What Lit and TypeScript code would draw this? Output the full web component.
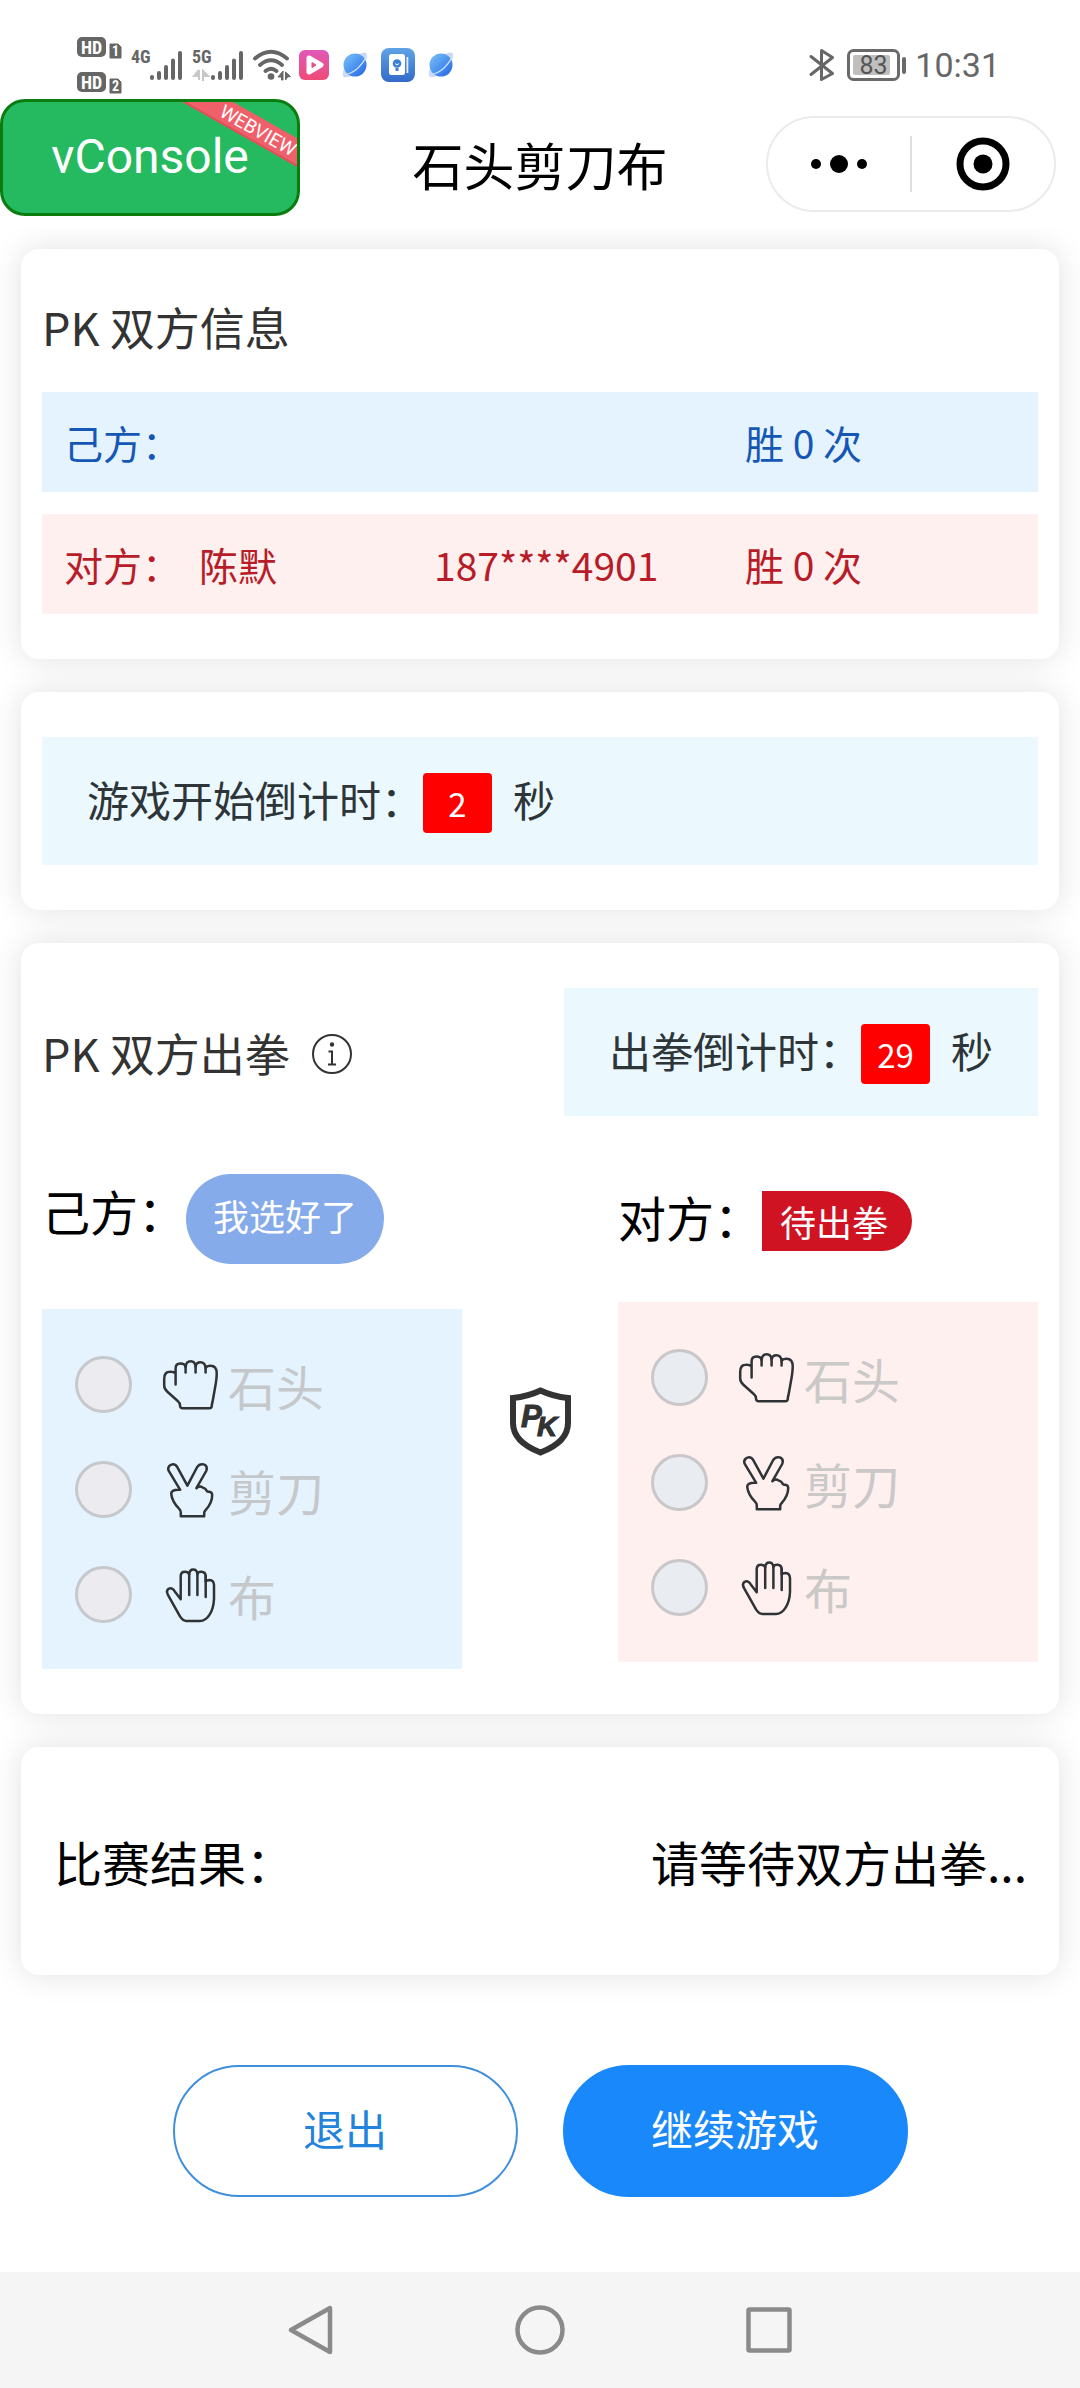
import { LitElement, html, svg, css } from "lit";
import { customElement, property, state } from "lit/decorators.js";

type Move = "rock" | "scissors" | "paper";

const MOVES: { id: Move; name: string }[] = [
  { id: "rock", name: "石头" },
  { id: "scissors", name: "剪刀" },
  { id: "paper", name: "布" },
];

const HANDS: Record<Move, string[]> = {
  rock: [
    "M15.6 29.5V13.5Q15.6 8.6 20.3 8.6Q24.6 8.6 25.6 11.8Q26.2 6.2 30.7 6.2Q35 6.2 35.6 11.5Q36.4 7.2 40.4 7.2Q45 7.2 45.6 12.8Q47 10.8 50.6 10.8Q56.7 10.8 56.7 18.5Q56.7 24 55 33L52.6 46.5Q51.8 49 51.8 51Q51.4 53.2 49.5 53.2H22.5Q20.3 53.2 20.1 51Q20 47.6 18 46.2L7.4 36.8Q4.2 34 4.2 30.5V23.8Q4.2 16.8 10 16.8Q14 16.6 15.6 18.6",
    "M25.6 11.5V17.5M35.6 11.2V17.5M45.6 12V17.5",
  ],
  scissors: [
    "M27.4 25.6L17.4 7.4Q15.2 3.4 11.4 4.6Q7.2 6.2 8.6 10.6L20.2 29.8Q11.6 29.2 11.2 33.6Q12 41.6 19 48.6Q20.9 50.4 20.8 52.6V56.2H44.2V53Q44.2 51.6 45.6 50.2Q52.4 42.6 52.2 34.6Q51.8 31.6 47.2 31.6Q45.8 28.2 42.4 27.4Q39.8 25.2 36.4 28.2L46.2 11Q48 6 43.8 4.4Q39.6 3.4 37.2 7Z",
  ],
  paper: [
    "M20.7 34.2V11Q20.9 6.8 25 6.8Q28.2 6.8 29.2 9.2Q29.6 4.4 33.2 4.4Q37 4.4 37.4 9Q38.4 6.6 41.4 6.8Q45.6 7 45.7 11.4V16.6Q46.6 15 49.6 15Q53.8 15.4 54 20V34Q53.6 43.6 49.6 49.6Q45.6 56 40 56H26.4Q23 56 20 51.4L8.2 30.4Q5.6 26 8.6 23.8Q12 22 14.6 26.2Z",
    "M29.2 9V30M37.4 9V30M45.7 11V32",
  ],
};

@customElement("hand-icon")
export class HandIcon extends LitElement {
  @property() move: Move = "rock";

  static styles = css`
    :host {
      display: block;
      width: 60px;
      height: 60px;
    }
    .hand {
      display: block;
      width: 100%;
      height: 100%;
      fill: none;
      stroke: #2f3336;
      stroke-width: 2.5;
      stroke-linecap: round;
      stroke-linejoin: round;
    }
  `;

  render() {
    return html`<svg class="hand" viewBox="0 0 60 60" aria-hidden="true">
      ${HANDS[this.move].map((d) => svg`<path d=${d} />`)}
    </svg>`;
  }
}

@customElement("status-bar")
export class StatusBar extends LitElement {
  static styles = css`
    :host {
      display: block;
    }
    .bar {
      display: flex;
      justify-content: space-between;
      align-items: center;
      height: 69px;
      padding: 30px 80px 0 77px;
      color: #666;
      font-family: Roboto, sans-serif;
    }
    .group {
      display: flex;
      align-items: center;
      gap: 10px;
    }
    svg {
      display: block;
      overflow: visible;
    }
    .tiny {
      font-family: "Roboto Condensed", "Liberation Sans Narrow", Roboto, sans-serif;
      font-weight: 700;
    }
    .time {
      font-size: 34px;
      line-height: 40px;
    }
  `;

  private hd(y: number, n: string) {
    return svg`
      <rect x="0" y=${y} width="29" height="20" rx="5" fill="#666" />
      <text x="14.5" y=${y + 16.5} font-size="18" text-anchor="middle" fill="#fff" class="tiny">HD</text>
      <path d="M33 ${y + 7}h8l3 3v11h-11z" fill="#666" stroke="#666" stroke-linejoin="round" />
      <text x="38.5" y=${y + 19} font-size="14" text-anchor="middle" fill="#fff" class="tiny">${n}</text>`;
  }

  private signal(label: string, arrows: boolean) {
    return html`<svg width="51" height="32" viewBox="0 0 51 32" aria-label=${label}>
      <text x="0" y="14" font-size="18" fill="#666" class="tiny">${label}</text>
      ${arrows
        ? svg`<path d="M7 21v10M7 21l-5 6h5M11 32v-10l5 5h-5" fill="#c8c8c8" stroke="#c8c8c8" stroke-width="2" />`
        : ""}
      <path d="M21 28v1M28 24v5M35 18v11M42 11.500v17.500M49 4v25" stroke="#666" stroke-width="4" stroke-linecap="round" />
    </svg>`;
  }

  private planet(id: string) {
    return html`<svg width="32" height="32" viewBox="0 0 32 32" aria-hidden="true">
      <defs>
        <linearGradient id=${id} x1="0" y1="0" x2="1" y2="1">
          <stop offset="0" stop-color="#7cc4fb" />
          <stop offset="1" stop-color="#2065e2" />
        </linearGradient>
      </defs>
      <path d="M20 5Q27 2 28 5Q29 9 24 16M6 17Q2 26 5 28Q9 29 15 25" fill="#c9d8f8" />
      <circle cx="16" cy="16" r="11.500" fill="url(#${id})" />
      <path d="M5 25.500Q12 25.500 19 19Q26 12 27.500 6" fill="none" stroke="#cfe2fd" stroke-width="1.200" />
    </svg>`;
  }

  render() {
    return html`<div class="bar">
      <div class="group">
        <svg width="44" height="56" viewBox="0 0 44 56">${this.hd(0, "1")}${this.hd(35, "2")}</svg>
        ${this.signal("4G", false)} ${this.signal("5G", true)}
        <svg width="36" height="32" viewBox="0 0 36 32" aria-hidden="true">
          <g fill="none" stroke="#666" stroke-width="3.800" stroke-linecap="round">
            <path d="M2 9.500Q18-4 34 9.500M7 16Q18 6.500 29 16M12.500 22Q18 17.500 23.500 22" />
          </g>
          <circle cx="18" cy="27.500" r="3.300" fill="#666" />
          <path d="M30 22v9h-1.500v-3h-3.500zM32.500 31v-8l5 4.500-3 .5z" fill="#666" stroke="#666" />
        </svg>
        <svg width="30" height="30" viewBox="0 0 30 30" aria-hidden="true">
          <defs>
            <linearGradient id="pink" x1="0" y1="0" x2="0" y2="1">
              <stop offset="0" stop-color="#df58b8" />
              <stop offset="1" stop-color="#f04b78" />
            </linearGradient>
          </defs>
          <rect width="30" height="30" rx="6" fill="url(#pink)" />
          <path d="M10 8L22 15L10 22Z" fill="#fff" stroke="#fff" stroke-width="5" stroke-linejoin="round" />
          <path d="M13 12.500L17 15L13 17.500Z" fill="#e2508f" stroke="#e2508f" />
        </svg>
        ${this.planet("p1")}
        <svg width="34" height="34" viewBox="0 0 34 34" aria-hidden="true">
          <defs>
            <linearGradient id="note" x1="0" y1="0" x2="0" y2="1">
              <stop offset="0" stop-color="#5fa3e6" />
              <stop offset="1" stop-color="#326bc8" />
            </linearGradient>
          </defs>
          <rect width="34" height="34" rx="8" fill="url(#note)" />
          <rect x="8" y="6" width="16" height="21" rx="2.500" fill="#fff" />
          <rect x="25.500" y="9" width="1.800" height="16" fill="#e6effb" />
          <circle cx="16" cy="15.500" r="4.300" fill="#3f7fd0" />
          <path d="M14.500 20v3h3v-3z" fill="#3f7fd0" />
          <path d="M14 15.500l2 1.500 2-1.500" fill="none" stroke="#fff" />
        </svg>
        ${this.planet("p2")}
      </div>
      <div class="group">
        <svg width="25" height="32" viewBox="0 0 25 32" aria-label="Bluetooth">
          <path
            d="M2 7.500L23.500 24.500L12.500 30.500V1.500L23.500 8.500L2 25.500"
            fill="none" stroke="#666" stroke-width="3" stroke-linejoin="round" stroke-linecap="round" />
        </svg>
        <svg width="61" height="32" viewBox="0 0 61 32">
          <rect x="4.500" y="1.500" width="50" height="29" rx="5" fill="none" stroke="#6a6a6a" stroke-width="3" />
          <rect x="9" y="6" width="37" height="20" rx="2" fill="#bfbfbf" />
          <rect x="58" y="8" width="4" height="17" rx="2" fill="#6a6a6a" />
          <text x="29.500" y="25" font-size="25" text-anchor="middle" fill="#555">83</text>
        </svg>
        <span class="time">10:31</span>
      </div>
    </div>`;
  }
}

@customElement("app-root")
export class AppRoot extends LitElement {
  @state() private startIn = 2;
  @state() private throwIn = 29;

  static styles = css`
    :host {
      display: flex;
      flex-direction: column;
      min-height: 100vh;
      background: #fff;
      color: #000;
      font-family: "Noto Sans CJK SC", "Noto Sans SC", sans-serif;
      font-size: 48px;
      line-height: 60px;
    }
    svg {
      display: block;
    }
    h1,
    h2 {
      margin: 0;
      font-weight: 400;
    }
    button {
      margin: 0;
      font-family: inherit;
      font-weight: 400;
      cursor: pointer;
    }
    .header {
      display: grid;
      grid-template-columns: 1fr auto 1fr;
      align-items: center;
      height: 130px;
    }
    .vconsole {
      position: relative;
      justify-self: start;
      align-self: start;
      width: 300px;
      height: 117px;
      padding: 0 0 2px;
      border: 3px solid #0b7d10;
      border-radius: 25px;
      background: #25b960;
      color: #fff;
      overflow: hidden;
      font-family: Roboto, sans-serif;
      font-size: 48px;
    }
    .ribbon {
      position: absolute;
      top: 16px;
      left: 175px;
      width: 160px;
      height: 25px;
      background: #f0606a;
      box-shadow: inset 0 -2px #dc4f59;
      font-size: 19px;
      line-height: 25px;
      text-align: center;
      transform: rotate(29.5deg);
    }
    .title {
      font-size: 51px;
    }
    .capsule {
      justify-self: end;
      display: flex;
      align-items: center;
      box-sizing: border-box;
      width: 290px;
      height: 96px;
      margin-right: 24px;
      border: 2px solid #ebebeb;
      border-radius: 48px;
    }
    .capsule-button {
      display: flex;
      flex: 1;
      justify-content: center;
      padding: 0;
      border: 0;
      background: none;
    }
    .capsule-button + .capsule-button {
      border-left: 2px solid #dedede;
    }
    .main {
      display: flex;
      flex-direction: column;
      gap: 33px;
      padding: 20px 21px 75px;
      overflow: hidden;
    }
    .card {
      padding: 45px 21px;
      border-radius: 18px;
      background: #fff;
      box-shadow: 0 0 32px rgba(0, 0, 0, 0.12);
    }
    .heading {
      color: #333;
      font-size: 45px;
      line-height: 65px;
    }
    .players {
      display: flex;
      flex-direction: column;
      gap: 22px;
      margin-top: 33px;
    }
    .player {
      display: grid;
      grid-template-columns: 135fr 235fr 311fr 271fr;
      padding: 20px 22px;
      font-size: 39px;
    }
    .self {
      background: #e5f3fe;
      color: #1557b5;
    }
    .rival {
      background: #fef0ef;
      color: #b81c28;
    }
    .countdown {
      display: flex;
      align-items: baseline;
      padding: 32px 45px;
      background: #ebf8fe;
      color: #2d3538;
      font-size: 42px;
    }
    .seconds {
      width: 69px;
      margin-right: 21px;
      border-radius: 4px;
      background: #f00;
      color: #fff;
      font-size: 33px;
      text-align: center;
    }
    .match-head {
      display: flex;
      justify-content: space-between;
      align-items: center;
    }
    .with-info {
      display: flex;
      align-items: center;
      gap: 22px;
    }
    .info {
      padding: 4px 0 0;
      border: 0;
      background: none;
    }
    .arena {
      display: grid;
      grid-template-columns: 420fr 156fr 420fr;
      align-items: start;
    }
    .side-head {
      display: flex;
      align-items: baseline;
      padding: 58px 0 45px;
    }
    .side-head.away {
      padding: 70px 0 51px;
    }
    .ready {
      padding: 14px 27px 22px;
      border: 0;
      border-radius: 45px;
      background: #85abea;
      color: #fff;
      font-size: 36px;
      line-height: 54px;
    }
    .pending {
      padding: 0 24px 0 18px;
      border-radius: 0 30px 30px 0;
      background: #cf1322;
      color: #fff;
      font-size: 36px;
    }
    .choices {
      margin: 0;
      padding: 23px 33px 22px;
      border: 0;
    }
    .choice {
      display: flex;
      align-items: center;
      height: 105px;
      color: #c5c8cb;
    }
    .choice hand-icon {
      margin: 0 8px 0 28px;
    }
    .radio {
      appearance: none;
      box-sizing: border-box;
      width: 57px;
      height: 57px;
      margin: 0;
      border: 3px solid #c5c8cc;
      border-radius: 50%;
      background: #ececf0;
    }
    .rival .radio {
      border-color: #c9c7ca;
      background: #e9ecf0;
    }
    .rival .choice {
      color: #cbc8c8;
    }
    .shield {
      justify-self: center;
      padding-top: 271px;
    }
    .shield-text {
      fill: #333;
      font-family: "Liberation Sans", Arial, sans-serif;
      font-weight: 700;
      font-style: italic;
    }
    .result {
      display: flex;
      justify-content: space-between;
      padding: 84px 32px 84px 33px;
    }
    .actions {
      display: flex;
      justify-content: center;
      gap: 45px;
      padding: 15px 24px 75px;
    }
    .action {
      width: 345px;
      height: 132px;
      padding: 0 0 7px;
      border: 2px solid #1988fa;
      border-radius: 66px;
      font-size: 42px;
    }
    .action.plain {
      border-color: #3f8fdc;
      background: #fff;
      color: #2183dc;
    }
    .action.primary {
      background: #1988fa;
      color: #fff;
    }
    .nav {
      display: flex;
      justify-content: center;
      align-items: center;
      gap: 169px;
      height: 116px;
      margin-top: auto;
      background: #f5f5f5;
    }
    .nav-button {
      width: 60px;
      padding: 0;
      border: 0;
      background: none;
    }
    .nav-icon {
      margin: 0 auto;
      fill: none;
      stroke: #8a8a8a;
      stroke-width: 4.5;
      stroke-linejoin: round;
    }
  `;

  private choices(side: "self" | "rival", legend: string) {
    return html`<fieldset class="choices ${side}" aria-label=${legend}>
      ${MOVES.map(
        (m) => html`<label class="choice">
          <input class="radio" type="radio" name=${side} value=${m.id} disabled />
          <hand-icon move=${m.id}></hand-icon>
          <span>${m.name}</span>
        </label>`
      )}
    </fieldset>`;
  }

  private countdown(label: string, seconds: number) {
    return html`<div class="countdown">
      <span>${label}</span><span class="seconds">${seconds}</span><span>秒</span>
    </div>`;
  }

  render() {
    return html`
      <status-bar></status-bar>
      <header class="header">
        <button class="vconsole" type="button">vConsole<span class="ribbon">WEBVIEW</span></button>
        <h1 class="title">石头剪刀布</h1>
        <div class="capsule">
          <button class="capsule-button" type="button" aria-label="更多">
            <svg width="58" height="56" viewBox="0 0 58 56">
              <circle cx="6" cy="28" r="5" />
              <circle cx="29" cy="28" r="9" />
              <circle cx="52" cy="28" r="5" />
            </svg>
          </button>
          <button class="capsule-button" type="button" aria-label="关闭">
            <svg width="56" height="56" viewBox="0 0 56 56">
              <circle cx="28" cy="28" r="23" fill="none" stroke="#000" stroke-width="7" />
              <circle cx="28" cy="28" r="9.500" />
            </svg>
          </button>
        </div>
      </header>

      <main class="main">
        <section class="card">
          <h2 class="heading">PK 双方信息</h2>
          <div class="players">
            <div class="player self"><span>己方：</span><span></span><span></span><span>胜 0 次</span></div>
            <div class="player rival">
              <span>对方：</span><span>陈默</span><span>187****4901</span><span>胜 0 次</span>
            </div>
          </div>
        </section>

        <section class="card">${this.countdown("游戏开始倒计时：", this.startIn)}</section>

        <section class="card">
          <div class="match-head">
            <div class="with-info">
              <h2 class="heading">PK 双方出拳</h2>
              <button class="info" type="button" aria-label="说明">
                <svg width="40" height="40" viewBox="0 0 40 40" fill="none" stroke="#333" stroke-width="2">
                  <circle cx="20" cy="20" r="19" />
                  <path d="M16.500 17.500H20V30.500M16 30.500H24" />
                  <circle cx="20" cy="10.500" r="1.200" fill="#333" />
                </svg>
              </button>
            </div>
            ${this.countdown("出拳倒计时：", this.throwIn)}
          </div>
          <div class="arena">
            <div>
              <div class="side-head">
                <span>己方：</span><button class="ready" type="button">我选好了</button>
              </div>
              ${this.choices("self", "己方")}
            </div>
            <div class="shield">
              <svg width="63" height="70" viewBox="0 0 63 70" role="img" aria-label="PK">
                <path
                  d="M31.500 3.500Q44 9.500 59 11V36Q59 55 31.500 65.500Q4 55 4 36V11Q19 9.500 31.500 3.500Z"
                  fill="none" stroke="#333" stroke-width="6" />
                <text class="shield-text" x="12" y="40" font-size="31" stroke="#333" stroke-width="1">P</text>
                <text class="shield-text" x="28" y="49" font-size="28" stroke="#fff" stroke-width="2" paint-order="stroke">K</text>
                <text class="shield-text" x="28" y="49" font-size="28" stroke="#333" stroke-width="1" aria-hidden="true">K</text>
              </svg>
            </div>
            <div>
              <div class="side-head away"><span>对方：</span><span class="pending">待出拳</span></div>
              ${this.choices("rival", "对方")}
            </div>
          </div>
        </section>

        <section class="card result">
          <span>比赛结果：</span>
          <span>请等待双方出拳...</span>
        </section>
      </main>

      <div class="actions">
        <button class="action plain" type="button">退出</button>
        <button class="action primary" type="button">继续游戏</button>
      </div>

      <nav class="nav">
        <button class="nav-button" type="button" aria-label="返回">
          <svg class="nav-icon" width="50" height="50" viewBox="0 0 50 50">
            <path d="M44 3V47L5 25Z" />
          </svg>
        </button>
        <button class="nav-button" type="button" aria-label="主页">
          <svg class="nav-icon" width="50" height="50" viewBox="0 0 50 50">
            <circle cx="25" cy="25" r="22.500" />
          </svg>
        </button>
        <button class="nav-button" type="button" aria-label="最近任务">
          <svg class="nav-icon" width="50" height="50" viewBox="0 0 50 50">
            <rect x="4.500" y="4.500" width="41" height="41" rx="1" />
          </svg>
        </button>
      </nav>
    `;
  }
}
